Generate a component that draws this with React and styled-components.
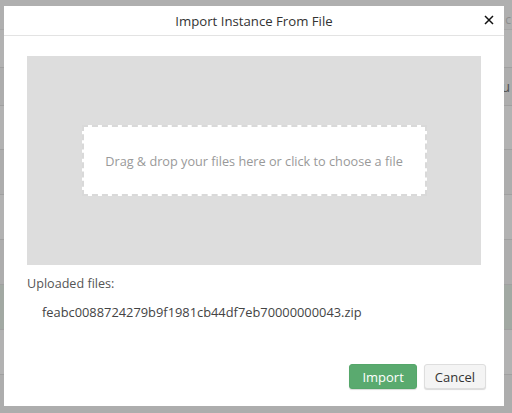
import React from "react";
import styled, { createGlobalStyle } from "styled-components";

const GlobalStyle = createGlobalStyle`
  html, body { margin: 0; padding: 0; }
  body {
    width: 512px;
    height: 413px;
    overflow: hidden;
    font-family: "Open Sans", "Liberation Sans", sans-serif;
    background: #ffffff;
  }
`;

const Page = styled.div`
  position: relative;
  width: 512px;
  height: 413px;
  overflow: hidden;
  display: flex;
  flex-direction: column;
  background: #ffffff;
`;

const TopBar = styled.div`
  height: 30px;
  flex: none;
  display: flex;
  align-items: flex-end;
  justify-content: flex-end;
  padding-right: 1px;
  box-sizing: border-box;
  padding-bottom: 1px;
  background: #fbfbfb;
  border-bottom: 1px solid #eeeeee;
  color: #cccccc;
  font-size: 12px;
`;

const TableRow = styled.div`
  height: ${(p) => p.$h}px;
  flex: none;
  display: flex;
  align-items: center;
  justify-content: flex-end;
  padding-right: 2px;
  box-sizing: border-box;
  border-bottom: 1px solid #e6e6e6;
  background: ${(p) => (p.$success ? "#e9f3ea" : p.$alt ? "#f8f8f8" : "#ffffff")};
  color: #777777;
  font-size: 14px;
`;

const Backdrop = styled.div`
  position: absolute;
  inset: 0;
  background: rgba(0, 0, 0, 0.3);
`;

const Modal = styled.div`
  position: absolute;
  left: 4px;
  top: 6px;
  width: 500px;
  height: 400px;
  background: #ffffff;
  display: flex;
  flex-direction: column;
`;

const Header = styled.div`
  position: relative;
  height: 29px;
  flex: none;
  display: flex;
  align-items: center;
  justify-content: center;
  border-bottom: 1px solid #e3e3e3;
  font-size: 13.2px;
  color: #333333;
`;

const CloseButton = styled.button`
  position: absolute;
  right: 8px;
  top: 7px;
  width: 14px;
  height: 14px;
  padding: 0;
  border: 0;
  background: transparent;
  display: flex;
  align-items: center;
  justify-content: center;
  cursor: pointer;
`;

const Body = styled.div`
  flex: 1;
  display: flex;
  flex-direction: column;
  padding: 20px 23px 0;
`;

const DropArea = styled.div`
  height: 209px;
  background: #dddddd;
  display: flex;
  align-items: center;
  justify-content: center;
`;

const DropZone = styled.div`
  width: 345px;
  height: 71px;
  box-sizing: border-box;
  background: #ffffff;
  border: 2px dashed #d9d9d9;
  display: flex;
  align-items: center;
  justify-content: center;
  font-size: 12.7px;
  color: #999999;
  cursor: pointer;
`;

const Label = styled.div`
  margin-top: 10px;
  font-size: 12.6px;
  line-height: 18px;
  color: #555555;
`;

const FileName = styled.div`
  margin-top: 10px;
  padding-left: 15px;
  font-size: 12.85px;
  line-height: 18px;
  color: #444444;
`;

const Footer = styled.div`
  margin-top: auto;
  display: flex;
  justify-content: flex-end;
  gap: 7px;
  padding: 0 18px 17px;
`;

const Button = styled.button`
  height: 25px;
  padding: 0 ${(p) => (p.$primary ? 12 : 10)}px;
  border-radius: 3px;
  font-family: inherit;
  font-size: 13px;
  cursor: pointer;
  border: 1px solid ${(p) => (p.$primary ? "#55a76a" : "#dedede")};
  background: ${(p) => (p.$primary ? "#5aaa6f" : "#f4f4f4")};
  color: ${(p) => (p.$primary ? "#ffffff" : "#333333")};
  box-shadow: 0 1px 1px rgba(0, 0, 0, 0.15);
`;

const rows = [
  { h: 38 },
  { h: 38, alt: true, text: "Ru" },
  { h: 44 },
  { h: 45, alt: true },
  { h: 45 },
  { h: 45, alt: true },
  { h: 45, success: true },
  { h: 45 },
  { h: 45, alt: true },
];

export default function App() {
  return (
    <>
      <GlobalStyle />
      <Page>
        <TopBar>c</TopBar>
        {rows.map((r, i) => (
          <TableRow key={i} $h={r.h} $alt={r.alt} $success={r.success}>
            {r.text}
          </TableRow>
        ))}
        <Backdrop />
        <Modal>
          <Header>
            Import Instance From File
            <CloseButton aria-label="Close">
              <svg width="10" height="10" viewBox="0 0 10 10">
                <path d="M1 1 L9 9 M9 1 L1 9" stroke="#111" strokeWidth="1.5" />
              </svg>
            </CloseButton>
          </Header>
          <Body>
            <DropArea>
              <DropZone>Drag &amp; drop your files here or click to choose a file</DropZone>
            </DropArea>
            <Label>Uploaded files:</Label>
            <FileName>feabc0088724279b9f1981cb44df7eb70000000043.zip</FileName>
          </Body>
          <Footer>
            <Button $primary>Import</Button>
            <Button>Cancel</Button>
          </Footer>
        </Modal>
      </Page>
    </>
  );
}
